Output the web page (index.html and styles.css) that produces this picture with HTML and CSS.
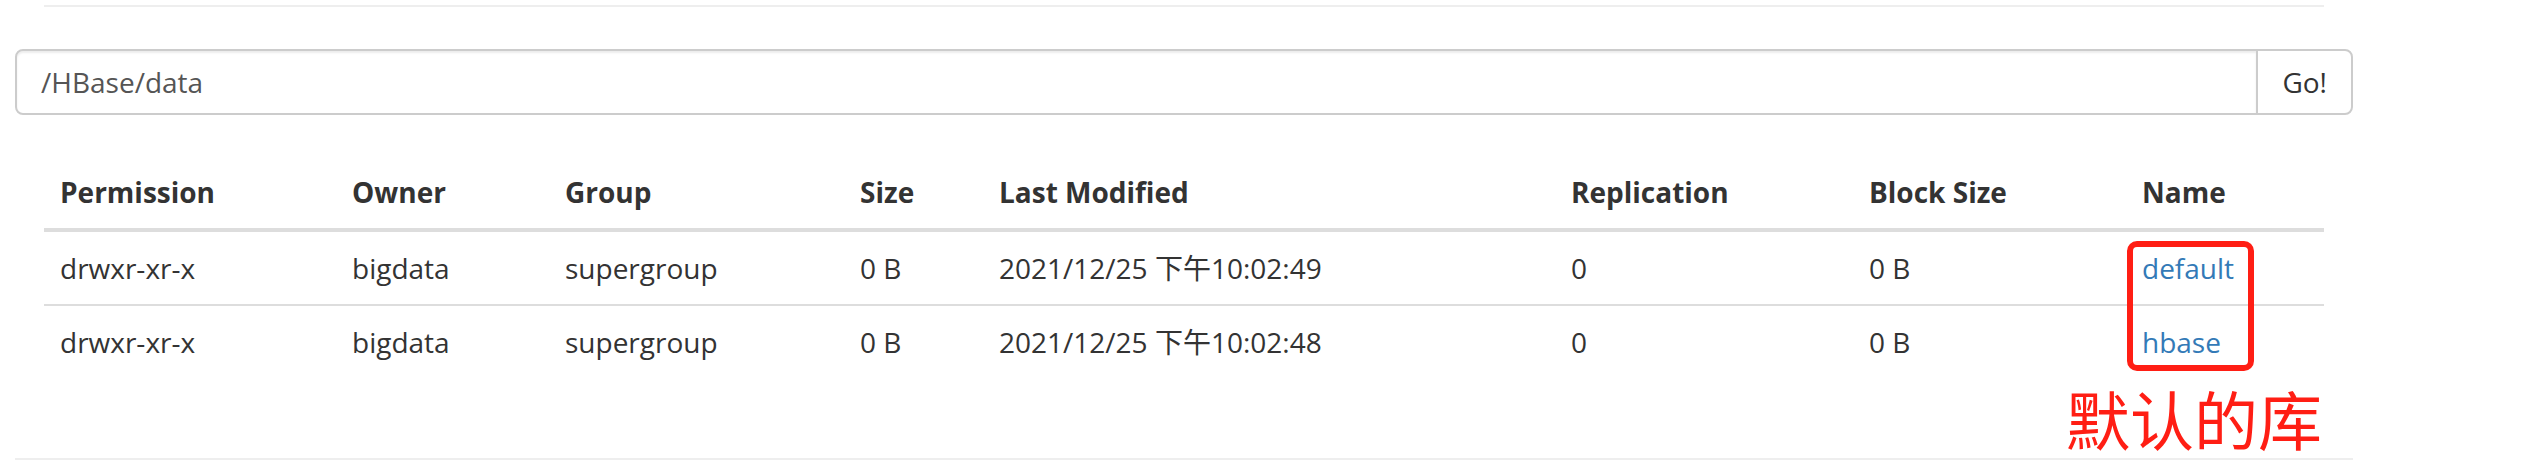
FILE: index.html
```html
<!DOCTYPE html>
<html lang="zh-CN">
<head>
<meta charset="utf-8">
<title>Browse Directory</title>
<link rel="stylesheet" href="styles.css">
</head>
<body>
<div class="page">
  <div class="top-rule"></div>
  <form class="search">
    <input class="search-input" type="text" value="/HBase/data">
    <button class="search-btn" type="button">Go!</button>
  </form>
  <table class="files">
    <colgroup>
      <col class="c-perm"><col class="c-owner"><col class="c-group"><col class="c-size">
      <col class="c-mod"><col class="c-repl"><col class="c-block"><col class="c-name">
    </colgroup>
    <thead>
      <tr>
        <th>Permission</th><th>Owner</th><th>Group</th><th>Size</th>
        <th>Last Modified</th><th>Replication</th><th>Block Size</th><th>Name</th>
      </tr>
    </thead>
    <tbody>
      <tr>
        <td>drwxr-xr-x</td><td>bigdata</td><td>supergroup</td><td>0 B</td>
        <td>2021/12/25 下午10:02:49</td><td>0</td><td>0 B</td><td><a href="#">default</a></td>
      </tr>
      <tr>
        <td>drwxr-xr-x</td><td>bigdata</td><td>supergroup</td><td>0 B</td>
        <td>2021/12/25 下午10:02:48</td><td>0</td><td>0 B</td><td><a href="#">hbase</a></td>
      </tr>
    </tbody>
  </table>
  <div class="bottom-rule"></div>
  <div class="mark-box"></div>
  <div class="mark-text">默认的库</div>
</div>
</body>
</html>
```
FILE: styles.css
```css
html, body {
  margin: 0;
  background: #fff;
}
body {
  font-family: "Open Sans", "Noto Sans CJK SC", sans-serif;
  font-size: 28px;
  color: #333;
}
.page {
  position: relative;
  padding: 5px 175px 20px 15px;
}
.top-rule {
  margin: 0 29px;
  border-top: 2px solid #eee;
}
.search {
  display: flex;
  margin: 42px 0 0;
  height: 66px;
}
.search-input {
  flex: 1;
  min-width: 0;
  box-sizing: border-box;
  height: 66px;
  border: 2px solid #ccc;
  border-radius: 8px 0 0 8px;
  padding: 0 24px;
  font: inherit;
  color: #555;
  background: #fff;
  box-shadow: inset 0 2px 2px rgba(0,0,0,.075);
  outline: none;
}
.search-btn {
  box-sizing: border-box;
  height: 66px;
  margin-left: -2px;
  border: 2px solid #ccc;
  border-radius: 0 8px 8px 0;
  background: #fff;
  padding: 0 24px;
  font: inherit;
  color: #333;
}
.files {
  margin: 41px 29px 0;
  width: calc(100% - 58px);
  border-collapse: collapse;
  table-layout: fixed;
}
.c-perm { width: 292px; }
.c-owner { width: 213px; }
.c-group { width: 295px; }
.c-size { width: 139px; }
.c-mod { width: 572px; }
.c-repl { width: 298px; }
.c-block { width: 273px; }
.c-name { width: 198px; }
.files th,
.files td {
  padding: 16px;
  line-height: 40px;
  text-align: left;
  white-space: nowrap;
}
.files th {
  font-weight: 700;
  border-bottom: 4px solid #ddd;
}
.files tbody tr + tr td {
  border-top: 2px solid #ddd;
}
.files a {
  color: #337ab7;
  text-decoration: none;
}
.bottom-rule {
  margin-top: 80px;
  border-top: 2px solid #eee;
}
.mark-box {
  position: absolute;
  left: 2127px;
  top: 241px;
  width: 127px;
  height: 130px;
  box-sizing: border-box;
  border: 6px solid #ff1e14;
  border-radius: 10px;
}
.mark-text {
  position: absolute;
  left: 2066px;
  top: 385px;
  font-family: "Noto Sans CJK SC", sans-serif;
  font-size: 64px;
  line-height: 64px;
  color: #ff1e14;
  white-space: nowrap;
}
```
